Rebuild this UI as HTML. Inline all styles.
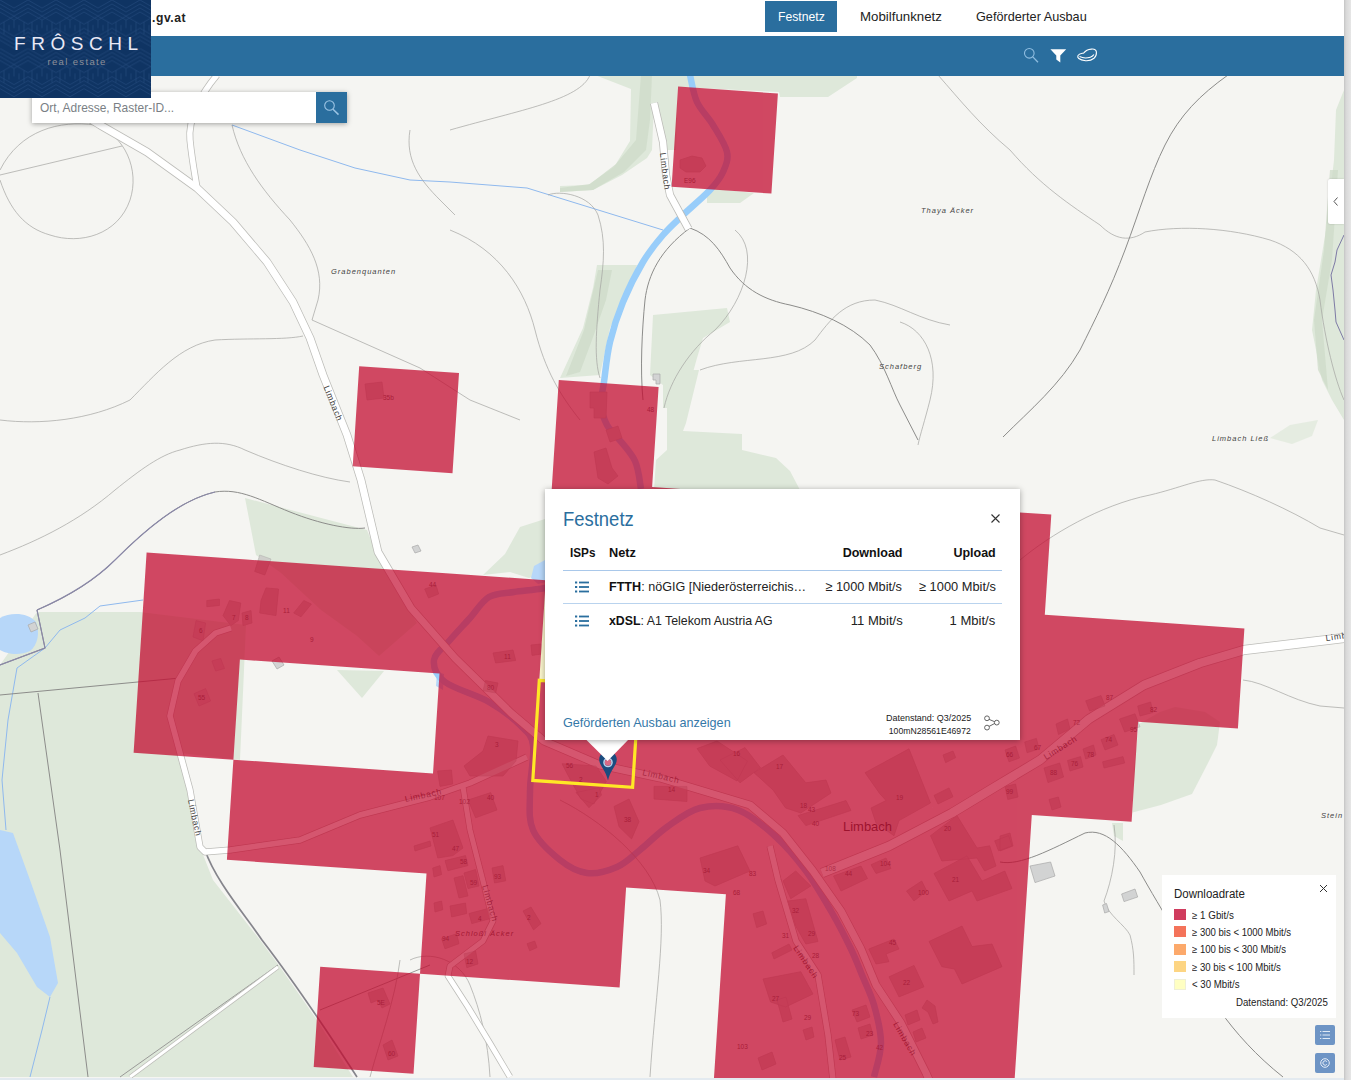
<!DOCTYPE html>
<html lang="de">
<head>
<meta charset="utf-8">
<title>Breitbandatlas</title>
<style>
*{box-sizing:border-box;margin:0;padding:0}
html,body{width:1351px;height:1080px;overflow:hidden;background:#fff}
body{font-family:"Liberation Sans",sans-serif;color:#222;position:relative}
.abs{position:absolute}
#page{position:absolute;left:0;top:0;width:1344px;height:1080px;overflow:hidden;background:#fff}
#sbar{position:absolute;left:1344px;top:0;width:7px;height:1080px;background:linear-gradient(90deg,#c4c4c4 0,#d8d8d8 2px,#e6e6e6 7px)}
#hdr{position:absolute;left:0;top:0;width:1344px;height:36px;background:#fff}
#bar{position:absolute;left:0;top:36px;width:1344px;height:39.5px;background:#2a6e9e}
#bottom{position:absolute;left:0;top:1078px;width:1344px;height:2px;background:#e3eaf0}
#map{position:absolute;left:0;top:0;width:1344px;height:1078px}
.t{position:absolute;white-space:nowrap;transform-origin:0 50%;line-height:1}
#logo{position:absolute;left:0;top:0;width:151px;height:97.500px;background:#0f3463;overflow:hidden}
#search{position:absolute;left:32px;top:92px;width:315px;height:31px;background:#fff;box-shadow:0 1px 5px rgba(0,0,0,.35)}
#search .btn{position:absolute;right:0;top:0;width:31px;height:31px;background:#2a6e9e}
#popup{position:absolute;left:545px;top:489px;width:474.5px;height:251px;background:#fff;box-shadow:0 1px 6px rgba(0,0,0,.35)}
#legend{position:absolute;left:1162px;top:875px;width:174px;height:143px;background:#fff}
.sw{position:absolute;left:12px;width:11.5px;height:11px}
.t.r{transform-origin:100% 50%}
.lg{font-size:10.500px;color:#222}
.ctl{position:absolute;left:1315px;width:20px;height:20px;background:#6d94c5;border-radius:2px}
#tab{position:absolute;left:1328px;top:179px;width:16px;height:45px;background:#fff;border-radius:2px 0 0 2px;box-shadow:0 0 2px rgba(0,0,0,.2)}
</style>
</head>
<body>
<div id="page">
<!--MAP-->
<svg id="map" viewBox="0 0 1344 1078" width="1344" height="1078">
<rect x="0" y="0" width="1344" height="1078" fill="#f5f5f2"/>
<g id="base">
<!-- green / forest areas -->
<g fill="#dee8da">
<path d="M0 665 L37 612 L140 612 L246 625 L240 760 L180 753 L200 847 L213 880 L260 940 L280 967 L317 1020 L353 1077 L0 1077 Z"/>
<path d="M245 498 L367 530 L380 562 L417 623 L379 656 L357 636 L321 610 L281 573 L256 555 Z"/>
<path d="M337 670 L384 671 L362 698 Z"/>
<path d="M595 75 L857 75 L857 78 L828 97 L780 97 L779 92 L678 87 L676 150 L665 150 L660 120 L654 103 L652 150 L647 158 L622 175 L593 190 L560 192 L560 186 L588 185 L614 167 L630 141 L631 89 Z"/>
<path d="M707 188 L754 193 L740 203 L707 203 Z"/>
<path d="M597 265 L637 265 L630 288 L610 328 L600 375 L560 378 L583 328 L593 288 Z"/>
<path d="M653 315 L727 308 L730 322 L703 338 L697 358 L683 408 L663 408 L663 385 L650 375 Z"/>
<path d="M664.500 370 L699 370 L686 423 L683 431 L742 434 L742 450 L776 458 L790 471 L800 490 L654 490 L656 460 L667 450 L667 397 Z"/>
<path d="M520 527 L545 519 L548 572 L529 578 L510 572 L483 575 L505 554 Z"/>
<path d="M1139 724 L1160 712 L1175 707 L1205 712 L1220 722 L1217 745 L1208 763 L1192 794 L1161 805 L1132.500 812.500 L1134 766 Z"/>
<path d="M1112 823 L1123 823 L1123 841 L1114 836 Z"/>
<path d="M1344 90 L1336 110 L1334 160 L1326 230 L1316 290 L1312 330 L1322 380 L1332 400 L1344 420 Z"/>
<path d="M1290 425 L1318 420 L1312 436 L1292 444 L1270 438 Z" opacity=".7"/>
</g>
<!-- darker hillshade in green -->
<g fill="#cddbc8" opacity=".75">
<path d="M641 75 L652 75 L650 120 L646 150 L624 172 L593 190 L560 192 L560 188 L590 184 L616 164 L636 140 Z"/>
<path d="M598 270 L612 270 L606 300 L592 340 L580 372 L566 376 L584 330 Z"/>
<path d="M1330 170 L1338 170 L1332 260 L1322 320 L1328 390 L1318 370 L1314 320 L1324 250 Z"/>
</g>
<!-- water -->
<g fill="#b7d7f9">
<path d="M0 618 C10 612 28 612 36 622 C40 632 38 645 30 651 C20 656 6 654 0 650 Z"/>
<path d="M0 830 L13 833 L30 880 L50 937 L58 983 L50 997 L37 987 L17 953 L0 933 Z"/>
<path d="M534 566 L545 560 L546 582 L538 584 L531 578 Z"/>
<path d="M437 672 L444 674 L443 690 L436 686 Z"/>
</g>
<g fill="none" stroke="#8fb9ee" stroke-width="1">
<path d="M232 125 L300 150 L355 168 L410 180 L450 182 L527 188 L663 230"/>
<path d="M143 600 L100 606 L85 618 L60 630 L45 648 L17 668 L8 720 L2 780 L6 830"/>
<path d="M50 997 L42 1030 L30 1077"/>
</g>
<path d="M690.0 75.0 C691.2 79.5 693.2 93.7 697.0 102.0 C700.8 110.3 708.0 116.7 713.0 125.0 C718.0 133.3 725.3 144.2 727.0 152.0 C728.7 159.8 725.8 165.7 723.0 172.0 C720.2 178.3 716.7 182.8 710.0 190.0 C703.3 197.2 690.8 207.5 683.0 215.0 C675.2 222.5 669.7 227.2 663.0 235.0 C656.3 242.8 649.7 250.8 643.0 262.0 C636.3 273.2 628.5 288.7 623.0 302.0 C617.5 315.3 613.2 328.7 610.0 342.0 C606.8 355.3 605.5 371.5 604.0 382.0 C602.5 392.5 600.5 397.8 601.0 405.0 C601.5 412.2 604.3 419.7 607.0 425.0 C609.7 430.3 612.3 431.0 617.0 437.0 C621.7 443.0 631.0 452.3 635.0 461.0 C639.0 469.7 640.0 484.3 641.0 489.0" fill="none" stroke="#98cdfa" stroke-width="6.500"/>
<path d="M641.0 489.0 C640.8 494.2 643.5 508.2 640.0 520.0 C636.5 531.8 628.3 550.3 620.0 560.0 C611.7 569.7 602.5 573.3 590.0 578.0 C577.5 582.7 557.7 585.7 545.0 588.0 C532.3 590.3 523.3 590.5 514.0 592.0 C504.7 593.5 496.3 592.7 489.0 597.0 C481.7 601.3 476.5 610.8 470.0 618.0 C463.5 625.2 456.0 633.0 450.0 640.0 C444.0 647.0 434.8 653.0 434.0 660.0 C433.2 667.0 435.8 675.0 445.0 682.0 C454.2 689.0 476.5 694.8 489.0 702.0 C501.5 709.2 512.7 717.8 520.0 725.0 C527.3 732.2 531.3 734.0 533.0 745.0 C534.7 756.0 530.0 776.8 530.0 791.0 C530.0 805.2 528.0 818.5 533.0 830.0 C538.0 841.5 551.0 852.8 560.0 860.0 C569.0 867.2 577.5 871.8 587.0 873.0 C596.5 874.2 608.2 870.8 617.0 867.0 C625.8 863.2 631.7 856.7 640.0 850.0 C648.3 843.3 657.0 834.0 667.0 827.0 C677.0 820.0 688.2 810.8 700.0 808.0 C711.8 805.2 725.5 805.3 738.0 810.0 C750.5 814.7 763.7 825.8 775.0 836.0 C786.3 846.2 796.7 858.5 806.0 871.0 C815.3 883.5 823.5 898.0 831.0 911.0 C838.5 924.0 845.8 938.3 851.0 949.0 C856.2 959.7 858.2 965.7 862.0 975.0 C865.8 984.3 870.8 993.7 874.0 1005.0 C877.2 1016.3 881.0 1031.0 881.0 1043.0 C881.0 1055.0 875.2 1071.3 874.0 1077.0" fill="none" stroke="#98cdfa" stroke-width="6.500"/>
<!-- contour lines -->
<g fill="none" stroke="#a3a3a0" stroke-width=".7">
<path d="M0 170 C20 130 60 120 95 125 C125 135 140 170 130 200 C118 235 80 245 50 235 C25 228 10 210 0 180"/>
<path d="M0 175 L122 146"/>
<path d="M232 125 C240 160 262 190 290 220 C310 245 325 270 318 300 L312 320"/>
<path d="M0 420 C40 425 90 420 130 400 C155 375 180 345 215 340 C250 338 285 340 303 336"/>
<path d="M312 320 L420 368 L470 400 L520 420"/>
<path d="M410 130 C405 160 420 180 440 200 L455 215"/>
<path d="M450 130 C520 110 580 100 590 75"/>
<path d="M450 230 C500 250 525 290 535 330 C545 370 560 395 580 420"/>
<path d="M548 195 C560 190 590 195 598 215 C606 240 604 262 600 290 C596 330 594 360 600 378"/>
<path d="M735 230 C760 250 745 300 715 330 C690 350 670 380 664 408"/>
<path d="M700 370 C740 355 790 365 815 340 C830 320 845 300 875 300 C900 305 920 320 950 325"/>
<path d="M938 75 C960 100 980 125 1010 150 C1040 185 1070 205 1100 225 C1115 240 1130 242 1145 232 C1180 225 1230 228 1270 240 C1300 250 1315 270 1320 300 C1325 340 1335 380 1344 400"/>
<path d="M900 322 C925 330 940 360 930 400 C925 420 920 435 918 445"/>
<path d="M1020 560 C1050 535 1100 505 1150 495 C1180 488 1200 478 1215 480 C1250 492 1290 510 1320 528 L1344 535"/>
<path d="M1243 680 C1265 682 1290 700 1320 706 L1344 708"/>
<path d="M1114 825 C1118 850 1112 880 1104 901 C1108 915 1125 925 1130 935 C1134 950 1134 960 1134 975"/>
<path d="M0 555 C40 540 80 520 115 490 C140 470 160 455 180 450 C205 442 225 440 245 450 C280 465 320 478 350 482"/>
<path d="M410 960 C430 950 460 960 470 985 C480 1010 488 1040 490 1077"/>
<path d="M400 960 C395 1000 380 1040 370 1077"/>
<path d="M560 800 C600 820 650 860 660 900 C665 940 655 1000 650 1077"/>
</g>
<!-- tracks (dark thin) -->
<g fill="none" stroke="#8c8c8a" stroke-width="1">
<path d="M1228 75 C1200 95 1180 115 1165 145 C1150 175 1140 210 1125 250 C1110 290 1095 320 1080 350 C1060 385 1030 410 1003 437"/>
<path d="M690 228 C660 250 648 275 645 300 C642 330 640 370 643 400"/>
<path d="M690 228 C710 235 720 250 730 268 C745 290 765 300 790 305 C820 312 850 325 870 345 C885 365 892 390 900 405 L918 440"/>
<path d="M0 695 L180 678"/>
<path d="M38 693 L60 850 L88 1077"/>
<path d="M205 850 C215 880 245 915 262 940 C285 970 320 1020 357 1077" stroke="#85858c" stroke-width="1.700"/>
<path d="M37 610 L45 648 L0 665 M37 610 C60 600 90 585 115 560 C145 530 180 500 215 492 C240 488 260 500 290 512 C320 524 350 530 365 528"/>
<path d="M1000 862 C1020 866 1050 850 1085 833 C1105 828 1122 846 1140 872 C1150 890 1162 910 1180 940 C1200 985 1230 1035 1283 1077"/>
<path d="M430 965 L320 1010 M120 1077 L278 965" stroke="#9a9a98"/>
</g>
<path d="M1344 235 L1337 250 L1335 262 L1331 275 L1333 290 L1335 310 L1336 322 L1344 340" fill="none" stroke="#7d7aa5" stroke-width="1"/>
<path d="M37 610 L45 648 L0 665 M37 610 C60 600 90 585 115 560 C145 530 180 500 215 492" fill="none" stroke="#8a88a8" stroke-width="1.200"/>
<!-- roads -->
<g fill="none" stroke-linecap="butt" stroke-linejoin="round">
<g stroke="#bcbcb8">
<path d="M40 88 L100 125 L147 152 L197 188 L233 222 L267 262 L293 302 L310 338 L323 375 L347 435 L361 480 L378 552 L411 608 L455 658 L511 713 L544 741 L600 765 L660 778 L700 790 L750 805 L783 833 L813 871 L841 911 L861 949 L876 985 L901 1023 L926 1073 L930 1082" stroke-width="8.500"/>
<path d="M217 75 C200 95 188 120 190 140 C192 160 195 175 197 188" stroke-width="7"/>
<path d="M654 103 L663 142 L666 175 L670 195 L688.500 229" stroke-width="8"/>
<path d="M822 873 L889 846 L952 813 L990 790 L1040 760 L1089 719 L1144 685 L1200 663 L1244 650 L1344 638" stroke-width="10"/>
<path d="M231 628 L215.600 633 L195.500 651 L178 681 L170 716 L180 753 L190 790 L200 847 L205 852 L230 850 L300 840 L360 815 L430 797 L470 783 L527 757" stroke-width="7"/>
<path d="M770 846 L778 880 L796 941 L818 975 L828 1035 L833 1080" stroke-width="7"/>
<path d="M150 912 L278 965 M120 1077 L278 965" stroke-width="0"/>
<path d="M463 787 L470 830 L483 881 L493 921 L483 941 L450 966 L448 976 L468 1007 L491 1045 L510 1077" stroke-width="6.500"/>
<path d="M130 1077 L278 967" stroke-width="4.500"/>
</g>
<g stroke="#ffffff">
<path d="M40 88 L100 125 L147 152 L197 188 L233 222 L267 262 L293 302 L310 338 L323 375 L347 435 L361 480 L378 552 L411 608 L455 658 L511 713 L544 741 L600 765 L660 778 L700 790 L750 805 L783 833 L813 871 L841 911 L861 949 L876 985 L901 1023 L926 1073 L930 1082" stroke-width="7"/>
<path d="M217 75 C200 95 188 120 190 140 C192 160 195 175 197 188" stroke-width="5.500"/>
<path d="M654 103 L663 142 L666 175 L670 195 L688.500 229" stroke-width="6.500"/>
<path d="M822 873 L889 846 L952 813 L990 790 L1040 760 L1089 719 L1144 685 L1200 663 L1244 650 L1344 638" stroke-width="8.500"/>
<path d="M231 628 L215.600 633 L195.500 651 L178 681 L170 716 L180 753 L190 790 L200 847 L205 852 L230 850 L300 840 L360 815 L430 797 L470 783 L527 757" stroke-width="5.500"/>
<path d="M770 846 L778 880 L796 941 L818 975 L828 1035 L833 1080" stroke-width="5.500"/>
<path d="M463 787 L470 830 L483 881 L493 921 L483 941 L450 966 L448 976 L468 1007 L491 1045 L510 1077" stroke-width="5"/>
<path d="M130 1077 L278 967" stroke-width="3"/>
</g>
</g>
<!-- grey buildings outside overlay -->
<g fill="#d2d3d3" stroke="#a9a9a9" stroke-width=".7">
<path d="M1030 866 L1050.600 862 L1055 876 L1035 882.600 Z"/>
<path d="M1121.600 894 L1135 889 L1137.700 897 L1124 901.600 Z"/>
<path d="M1102.600 905 L1106.500 903.500 L1109 911.500 L1104.700 913 Z"/>
<path d="M653 374 L660 374 L660 384 L656 384 L656 380 L653 380 Z"/>
<path d="M28 625 L35 622 L38 629 L31 632 Z"/>
<path d="M272 661 L279 657 L284 665 L277 669 Z"/>
<path d="M412 547 L418 545 L421 551 L415 553 Z"/>
</g>

<path d="M488 736 L518 741 L516 761 L503 776 L470 776 L464 766 L483 751ZM437.6 771 L451.5 770 L452.7 784 L440 786.4ZM468 800 L490.7 792.6 L497 810 L475.6 817.8ZM430 827.9 L452.9 820 L463 848 L452.9 855.6 L437.8 858ZM414 846 L430 841 L431 846 L415 851ZM562 763.7 L596 766 L606.4 781.4 L593.8 804 L581 799 L571 781ZM614 806.5 L629 799 L639 821.7 L631.6 839 L619 826.7ZM654 786.4 L687 786.4 L687 801.5 L654 799ZM697 748.6 L717 741 L747.5 761 L737 781 L709.7 766ZM493 653 L513 650 L515.7 660.5 L495.6 663ZM485.5 680.6 L498 683 L495.6 693 L483 690.7ZM531 645 L541 644 L542 654 L532 655.4ZM720 760 L745 747.6 L760.5 767.7 L740 782.8ZM754 772.7 L783 755 L805.8 782.8 L826 780 L831 793 L800.8 813 L785.6 808 L773 790ZM798 815.6 L846 800.5 L851 810.5 L805.8 825.6ZM865 772.7 L909 748.8 L930.5 803 L899 820.6 L894 835.7 L876 823 L871 808 L886 800.5 L880 794ZM934 795.4 L949 787.9 L953 796.7 L938 804ZM943 755 L953 751 L955.7 757.6 L945.6 762.7ZM930.5 835.7 L957 815.6 L977 848 L989.7 845.8 L996 866 L984.6 871 L977 858 L941.8 861ZM994.7 840.8 L1008.6 835.7 L1012 845.8 L998.5 850.8ZM934 873.5 L967 855.9 L982 881 L1004.8 871 L1012 888.6 L977 901 L972 891 L949 901ZM906.5 891 L921.7 881 L926.7 891 L914 901ZM833.5 876 L861 866 L867.5 878.5 L841 891ZM871 864.7 L886 858 L891 868.5 L876 873.5ZM700 858 L737.8 845.8 L750 871 L715 886 L705 881ZM783 881 L795.7 871 L810.8 886 L790.7 898.7ZM788 901 L805.8 898.7 L818 941.5 L805.8 944 L795.7 926ZM753 913.8 L763 911 L766.7 923.9 L756.7 927.6ZM771.8 952.8 L789 944 L792 950 L774 959ZM763 979 L800.8 971.7 L813 994 L785.6 1007 L770.5 1002ZM868.8 949 L894 939 L899 949 L886 954 L889 961.7 L876 964ZM929 941.5 L962 926 L972 946.5 L992 944 L1002 966.7 L962 984 L954.4 969 L941.8 966.7ZM889 976.8 L914 965.4 L924 986.8 L899 996.9ZM445 860.6 L465.5 855.6 L468 865.6 L447.9 870.7ZM454 878 L463 875.7 L468 895.9 L459 898ZM464 873 L475.6 869.5 L479 886 L468 888.5ZM492 868 L503 865.6 L505.8 880.8 L494.5 883ZM469 913.5 L488 908.5 L490.7 918.5 L471.8 923.6ZM523 911 L531 907 L541 923.6 L533.5 929.9ZM527 943.7 L534.7 941 L537 947.5 L529.7 950.8ZM441.6 938.7 L456.7 933.7 L459 943.7 L445 948.8ZM464 953.8 L475.6 951 L478 963.9 L466.8 967.7ZM432.7 868 L440 865.6 L441.6 874.5 L434 877ZM434 903 L441.6 901 L442.8 909.7 L435 912ZM450 906 L465.5 903 L466.7 913.5 L451.6 917ZM576 792.6 L599 787.6 L601.5 795 L589 807.7ZM1085.7 700.8 L1101 695.6 L1105 706 L1089.6 711ZM1137.7 706 L1150.6 702 L1153 712.5 L1140 716ZM1119.5 719 L1135 713.8 L1140 726.8 L1124.7 732ZM1101 739.7 L1114 734.5 L1118 745 L1105 750ZM1056 724 L1067.5 719 L1070 729 L1058.5 734.5ZM1083 749 L1093.5 745 L1096 755 L1085.7 759ZM1067.5 760.5 L1080.5 756.6 L1083 767 L1070 771ZM1044 768 L1059.7 763 L1063.6 777 L1048 782.6ZM1102.6 761.8 L1123 756.6 L1124.7 763 L1104 768ZM1005 786.5 L1015.6 784 L1018 797 L1007.8 799.5ZM1005 750 L1015.6 746 L1019.5 758 L1009 761.8ZM1024.7 742 L1036.4 738.4 L1039 749 L1027 752.7ZM1049 799.5 L1058.4 797 L1061 807 L1052 810ZM1000 836 L1010 833 L1013 846 L1000 851ZM259.7 555 L271 559 L264.8 575 L254.7 571.5ZM194 693.7 L205.6 688.6 L210.6 701 L199 706ZM211.9 661 L220.7 658.4 L224.5 668.5 L215.6 671ZM196 620.6 L205.6 623 L203 640.8 L193 637ZM223 615.6 L229.5 600.5 L240.8 603 L238.3 620.6 L230.8 625.6ZM242 613 L251 610.5 L252 623 L243 625.6ZM266 587.9 L278.6 589 L276 615.6 L259.7 613 L261 600.5ZM206.8 600.5 L219.4 599 L219.4 605.5 L206.8 606.7ZM293.7 613 L303.8 600.5 L311.4 604 L301 616.8ZM424.7 589 L436 585 L438.6 594 L428.5 598ZM590 392 L607 392 L606 418 L594 418 L594 408 L590 408ZM606 430 L618 426 L622 438 L610 442ZM594 452 L606 448 L612 468 L618 476 L608 484 L598 478ZM365 384 L382 382 L384 398 L367 400ZM680 160 L692 156 L702 158 L706 166 L700 172 L686 172 L680 168ZM852 1010 L866 1005 L870 1017 L857 1022ZM858 1028 L870 1024 L873 1035 L861 1039ZM835 1040 L845 1037 L851 1057 L840 1060ZM777 1000 L786 997 L792 1019 L783 1022ZM803 1030 L812 1027 L814 1037 L806 1040ZM758 1058 L772 1052 L776 1064 L762 1070ZM905 1015 L917 1010 L920 1020 L908 1025ZM913 1032 L922 1028 L926 1038 L916 1042ZM927 1000 L935 1006 L938 1022 L933 1024 L928 1012 L922 1008ZM368 993 L383 988 L390 1004 L382 1008 L378 1000 L371 1003ZM383 1045 L392 1040 L398 1056 L388 1060Z" fill="#cfcfcb" stroke="#b4b4b0" stroke-width=".6"/>

<g font-family="Liberation Sans, sans-serif" fill="#3a3a3a">
<text x="843" y="831" font-size="13" textLength="49" lengthAdjust="spacingAndGlyphs" fill="#2a2a2a">Limbach</text>
<g font-size="8.500" letter-spacing=".8">
<text transform="translate(323.500 387) rotate(68)">Limbach</text>
<text transform="translate(660 153) rotate(83)">Limbach</text>
<text transform="translate(188 800) rotate(78)">Limbach</text>
<text transform="translate(405.500 802) rotate(-12)">Limbach</text>
<text transform="translate(642 775) rotate(13)">Limbach</text>
<text transform="translate(1046 760) rotate(-32)">Limbach</text>
<text transform="translate(793 948) rotate(56)">Limbach</text>
<text transform="translate(893 1024) rotate(60)">Limbach</text>
<text transform="translate(482 886) rotate(74)">Limbach</text>
<text transform="translate(1326 641) rotate(-8)">Limbach</text>
</g>
<g font-size="7.500" font-style="italic" letter-spacing="1" fill="#444">
<text x="331" y="273.500">Grabenquanten</text>
<text x="921" y="212.500">Thaya Äcker</text>
<text x="879" y="368.500">Schafberg</text>
<text x="1212" y="440.500">Limbach Ließ</text>
<text x="1321" y="817.500">Stein</text>
<text x="455" y="935.500">Schloßl Äcker</text>
</g>
<g font-size="6.500" fill="#555">
<text x="383" y="400">35b</text><text x="684" y="183">E96</text><text x="647" y="412">48</text>
<text x="429" y="587">44</text><text x="283" y="613">11</text><text x="232" y="620">7</text><text x="245" y="620">8</text><text x="199" y="633">6</text><text x="310" y="642">9</text><text x="198" y="700">55</text>
<text x="504" y="659">11</text><text x="487" y="690">80</text><text x="495" y="747">3</text><text x="566" y="768">56</text><text x="579" y="782">2</text><text x="595" y="797">1</text><text x="624" y="822">38</text><text x="668" y="792">14</text>
<text x="733" y="756">16</text><text x="776" y="769">17</text><text x="800" y="808">18</text><text x="808" y="812">43</text><text x="812" y="826">40</text><text x="896" y="800">19</text><text x="944" y="831">20</text><text x="952" y="882">21</text><text x="918" y="895">100</text><text x="880" y="866">104</text><text x="845" y="876">44</text><text x="825" y="871">108</text>
<text x="703" y="873">34</text><text x="749" y="876">83</text><text x="733" y="895">68</text><text x="792" y="913">32</text><text x="782" y="938">31</text><text x="808" y="936">29</text><text x="812" y="958">28</text><text x="772" y="1001">27</text><text x="889" y="945">45</text><text x="903" y="985">22</text><text x="852" y="1016">73</text>
<text x="487" y="800">40</text><text x="459" y="804">102</text><text x="432" y="837">51</text><text x="452" y="851">47</text><text x="460" y="864">58</text><text x="470" y="885">59</text><text x="494" y="879">93</text><text x="478" y="921">4</text><text x="527" y="920">2</text><text x="442" y="941">94</text><text x="466" y="964">12</text><text x="434" y="800">107</text>
<text x="1106" y="700">87</text><text x="1150" y="712">82</text><text x="1130" y="732">95</text><text x="1105" y="742">74</text><text x="1073" y="725">72</text><text x="1087" y="757">78</text><text x="1071" y="766">76</text><text x="1050" y="775">88</text><text x="1006" y="794">99</text><text x="1006" y="757">66</text><text x="1034" y="750">67</text>
<text x="377" y="1005">5E</text><text x="388" y="1056">60</text><text x="804" y="1020">29</text><text x="737" y="1049">103</text><text x="839" y="1060">25</text><text x="866" y="1036">23</text><text x="876" y="1050">42</text>
</g>
</g>

</g>
<path d="M545.8 580.2 L645.6 587.1 L639.1 687.2 L539.3 680.3Z" fill="#fbf5c8" fill-opacity="0.9"/>
<clipPath id="rc"><path d="M678.1 86.6 L777.9 93.5 L771.4 193.6 L671.6 186.7ZM359.2 366.2 L459.0 373.1 L452.5 473.2 L352.7 466.3ZM558.8 380.0 L658.6 386.9 L652.1 487.0 L552.3 480.1ZM552.3 480.1 L652.1 487.0 L645.6 587.1 L545.8 580.2ZM652.1 487.0 L751.9 493.9 L745.4 594.0 L645.6 587.1ZM751.9 493.9 L851.7 500.8 L845.2 600.9 L745.4 594.0ZM851.7 500.8 L951.5 507.7 L945.0 607.8 L845.2 600.9ZM951.5 507.7 L1051.3 514.6 L1044.8 614.7 L945.0 607.8ZM146.6 552.6 L246.4 559.5 L239.9 659.6 L140.1 652.7ZM246.4 559.5 L346.2 566.4 L339.7 666.5 L239.9 659.6ZM346.2 566.4 L446.0 573.3 L439.5 673.4 L339.7 666.5ZM446.0 573.3 L545.8 580.2 L539.3 680.3 L439.5 673.4ZM645.6 587.1 L745.4 594.0 L738.9 694.1 L639.1 687.2ZM745.4 594.0 L845.2 600.9 L838.7 701.0 L738.9 694.1ZM845.2 600.9 L945.0 607.8 L938.5 707.9 L838.7 701.0ZM945.0 607.8 L1044.8 614.7 L1038.3 714.8 L938.5 707.9ZM1044.8 614.7 L1144.6 621.6 L1138.1 721.7 L1038.3 714.8ZM1144.6 621.6 L1244.4 628.5 L1237.9 728.6 L1138.1 721.7ZM140.1 652.7 L239.9 659.6 L233.4 759.7 L133.6 752.8ZM439.5 673.4 L539.3 680.3 L532.8 780.4 L433.0 773.5ZM539.3 680.3 L639.1 687.2 L632.6 787.3 L532.8 780.4ZM639.1 687.2 L738.9 694.1 L732.4 794.2 L632.6 787.3ZM738.9 694.1 L838.7 701.0 L832.2 801.1 L732.4 794.2ZM838.7 701.0 L938.5 707.9 L932.0 808.0 L832.2 801.1ZM938.5 707.9 L1038.3 714.8 L1031.8 814.9 L932.0 808.0ZM1038.3 714.8 L1138.1 721.7 L1131.6 821.8 L1031.8 814.9ZM233.4 759.7 L333.2 766.6 L326.7 866.7 L226.9 859.8ZM333.2 766.6 L433.0 773.5 L426.5 873.6 L326.7 866.7ZM433.0 773.5 L532.8 780.4 L526.3 880.5 L426.5 873.6ZM532.8 780.4 L632.6 787.3 L626.1 887.4 L526.3 880.5ZM632.6 787.3 L732.4 794.2 L725.9 894.3 L626.1 887.4ZM732.4 794.2 L832.2 801.1 L825.7 901.2 L725.9 894.3ZM832.2 801.1 L932.0 808.0 L925.5 908.1 L825.7 901.2ZM932.0 808.0 L1031.8 814.9 L1025.3 915.0 L925.5 908.1ZM426.5 873.6 L526.3 880.5 L519.8 980.6 L420.0 973.7ZM526.3 880.5 L626.1 887.4 L619.6 987.5 L519.8 980.6ZM725.9 894.3 L825.7 901.2 L819.2 1001.3 L719.4 994.4ZM825.7 901.2 L925.5 908.1 L919.0 1008.2 L819.2 1001.3ZM925.5 908.1 L1025.3 915.0 L1018.8 1015.1 L919.0 1008.2ZM320.2 966.8 L420.0 973.7 L413.5 1073.8 L313.7 1066.9ZM719.4 994.4 L819.2 1001.3 L812.7 1101.4 L712.9 1094.5ZM819.2 1001.3 L919.0 1008.2 L912.5 1108.3 L812.7 1101.4ZM919.0 1008.2 L1018.8 1015.1 L1012.3 1115.2 L912.5 1108.3ZM712.9 1094.5 L812.7 1101.4 L806.2 1201.5 L706.4 1194.6ZM812.7 1101.4 L912.5 1108.3 L906.0 1208.4 L806.2 1201.5ZM912.5 1108.3 L1012.3 1115.2 L1005.8 1215.3 L906.0 1208.4Z"/></clipPath>
<path d="M678.1 86.6 L777.9 93.5 L771.4 193.6 L671.6 186.7ZM359.2 366.2 L459.0 373.1 L452.5 473.2 L352.7 466.3ZM558.8 380.0 L658.6 386.9 L652.1 487.0 L552.3 480.1ZM552.3 480.1 L652.1 487.0 L645.6 587.1 L545.8 580.2ZM652.1 487.0 L751.9 493.9 L745.4 594.0 L645.6 587.1ZM751.9 493.9 L851.7 500.8 L845.2 600.9 L745.4 594.0ZM851.7 500.8 L951.5 507.7 L945.0 607.8 L845.2 600.9ZM951.5 507.7 L1051.3 514.6 L1044.8 614.7 L945.0 607.8ZM146.6 552.6 L246.4 559.5 L239.9 659.6 L140.1 652.7ZM246.4 559.5 L346.2 566.4 L339.7 666.5 L239.9 659.6ZM346.2 566.4 L446.0 573.3 L439.5 673.4 L339.7 666.5ZM446.0 573.3 L545.8 580.2 L539.3 680.3 L439.5 673.4ZM645.6 587.1 L745.4 594.0 L738.9 694.1 L639.1 687.2ZM745.4 594.0 L845.2 600.9 L838.7 701.0 L738.9 694.1ZM845.2 600.9 L945.0 607.8 L938.5 707.9 L838.7 701.0ZM945.0 607.8 L1044.8 614.7 L1038.3 714.8 L938.5 707.9ZM1044.8 614.7 L1144.6 621.6 L1138.1 721.7 L1038.3 714.8ZM1144.6 621.6 L1244.4 628.5 L1237.9 728.6 L1138.1 721.7ZM140.1 652.7 L239.9 659.6 L233.4 759.7 L133.6 752.8ZM439.5 673.4 L539.3 680.3 L532.8 780.4 L433.0 773.5ZM539.3 680.3 L639.1 687.2 L632.6 787.3 L532.8 780.4ZM639.1 687.2 L738.9 694.1 L732.4 794.2 L632.6 787.3ZM738.9 694.1 L838.7 701.0 L832.2 801.1 L732.4 794.2ZM838.7 701.0 L938.5 707.9 L932.0 808.0 L832.2 801.1ZM938.5 707.9 L1038.3 714.8 L1031.8 814.9 L932.0 808.0ZM1038.3 714.8 L1138.1 721.7 L1131.6 821.8 L1031.8 814.9ZM233.4 759.7 L333.2 766.6 L326.7 866.7 L226.9 859.8ZM333.2 766.6 L433.0 773.5 L426.5 873.6 L326.7 866.7ZM433.0 773.5 L532.8 780.4 L526.3 880.5 L426.5 873.6ZM532.8 780.4 L632.6 787.3 L626.1 887.4 L526.3 880.5ZM632.6 787.3 L732.4 794.2 L725.9 894.3 L626.1 887.4ZM732.4 794.2 L832.2 801.1 L825.7 901.2 L725.9 894.3ZM832.2 801.1 L932.0 808.0 L925.5 908.1 L825.7 901.2ZM932.0 808.0 L1031.8 814.9 L1025.3 915.0 L925.5 908.1ZM426.5 873.6 L526.3 880.5 L519.8 980.6 L420.0 973.7ZM526.3 880.5 L626.1 887.4 L619.6 987.5 L519.8 980.6ZM725.9 894.3 L825.7 901.2 L819.2 1001.3 L719.4 994.4ZM825.7 901.2 L925.5 908.1 L919.0 1008.2 L819.2 1001.3ZM925.5 908.1 L1025.3 915.0 L1018.8 1015.1 L919.0 1008.2ZM320.2 966.8 L420.0 973.7 L413.5 1073.8 L313.7 1066.9ZM719.4 994.4 L819.2 1001.3 L812.7 1101.4 L712.9 1094.5ZM819.2 1001.3 L919.0 1008.2 L912.5 1108.3 L812.7 1101.4ZM919.0 1008.2 L1018.8 1015.1 L1012.3 1115.2 L912.5 1108.3ZM712.9 1094.5 L812.7 1101.4 L806.2 1201.5 L706.4 1194.6ZM812.7 1101.4 L912.5 1108.3 L906.0 1208.4 L806.2 1201.5ZM912.5 1108.3 L1012.3 1115.2 L1005.8 1215.3 L906.0 1208.4Z" fill="#c30d31" fill-opacity="0.75"/>
<g clip-path="url(#rc)" opacity=".07" fill="none" stroke-linejoin="round"><g stroke="#ffffff">
<path d="M40 88 L100 125 L147 152 L197 188 L233 222 L267 262 L293 302 L310 338 L323 375 L347 435 L361 480 L378 552 L411 608 L455 658 L511 713 L544 741 L600 765 L660 778 L700 790 L750 805 L783 833 L813 871 L841 911 L861 949 L876 985 L901 1023 L926 1073 L930 1082" stroke-width="7"/>
<path d="M217 75 C200 95 188 120 190 140 C192 160 195 175 197 188" stroke-width="5.500"/>
<path d="M654 103 L663 142 L666 175 L670 195 L688.500 229" stroke-width="6.500"/>
<path d="M822 873 L889 846 L952 813 L990 790 L1040 760 L1089 719 L1144 685 L1200 663 L1244 650 L1344 638" stroke-width="8.500"/>
<path d="M231 628 L215.600 633 L195.500 651 L178 681 L170 716 L180 753 L190 790 L200 847 L205 852 L230 850 L300 840 L360 815 L430 797 L470 783 L527 757" stroke-width="5.500"/>
<path d="M770 846 L778 880 L796 941 L818 975 L828 1035 L833 1080" stroke-width="5.500"/>
<path d="M463 787 L470 830 L483 881 L493 921 L483 941 L450 966 L448 976 L468 1007 L491 1045 L510 1077" stroke-width="5"/>
<path d="M130 1077 L278 967" stroke-width="3"/>
</g></g>
<path d="M539.3 680.3 L639.1 687.2 L632.6 787.3 L532.8 780.4Z" fill="none" stroke="#ffe826" stroke-width="3.200" stroke-linejoin="miter"/>
<g id="labels" font-family="Liberation Sans, sans-serif">

</g>
</svg>
<div id="hdr"></div>
<div id="bar"></div>
<div id="bottom"></div>
<div class="t" id="url" style="left:152px;top:11px;font-size:13px;font-weight:bold;letter-spacing:.6px;color:#222;transform:scaleX(0.9324)">.gv.at</div>
<div class="abs" style="left:765px;top:1px;width:72px;height:31px;background:#2a6e9e"></div>
<div class="t" id="n1" style="left:777.5px;top:10px;font-size:13.5px;color:#fff;transform:scaleX(0.9038)">Festnetz</div>
<div class="t" id="n2" style="left:859.5px;top:10px;font-size:13.5px;color:#222;transform:scaleX(0.9831)">Mobilfunknetz</div>
<div class="t" id="n3" style="left:975.5px;top:10px;font-size:13.5px;color:#222;transform:scaleX(0.9398)">Geförderter Ausbau</div>
<svg class="abs" style="left:1020px;top:44px" width="84" height="24" viewBox="0 0 84 24">
 <g fill="none" stroke="#8fbde0" stroke-width="1.1"><circle cx="9.300" cy="9.300" r="4.800"/><path d="M12.800 12.900 L18 18.300" stroke-width="1.300"/></g>
 <path d="M30.4 5.2 H46.2 L40.3 11.6 V18.4 L36.3 15.6 V11.6 Z" fill="#fff"/>
 <path d="M58 11.5 c1.5-2.4 4-2 5.8-2.6 c1.6-2.2 4.6-3.6 7.6-3.8 c2.6-.2 4.8 .6 5 3 c.2 2.2 -.6 4.600 -2.400 6.200 c-2.200 1.800 -5.400 2.600 -8.400 2.400 c-2.600 -.2 -5.200 -.8 -6.800 -2.200 c-1.300 -1.100 -1.400 -2 -.8 -3 z M59.500 12.600 c2.800 1.300 7.500 1.600 10.800 .6 c1.600 -.5 3 -1.400 3.600 -2.600" fill="none" stroke="#fff" stroke-width="1.1" stroke-linejoin="round"/>
</svg>

<div id="search"><div class="t" id="ph" style="left:8px;top:8.500px;font-size:13px;color:#7a7f85;transform:scaleX(0.9185)">Ort, Adresse, Raster-ID...</div><div class="btn"><svg width="31" height="31" viewBox="0 0 31 31"><g fill="none" stroke="#9cc4e4" stroke-width="1.1"><circle cx="13.5" cy="13.500" r="4.800"/><path d="M17 17.200 L22.500 22.600" stroke-width="1.500"/></g></svg></div></div>

<div id="logo">
<svg class="abs" style="left:0;top:0" width="151" height="97" viewBox="0 0 151 97">
<defs><pattern id="hx" width="28" height="48.500" patternUnits="userSpaceOnUse">
<g fill="none" stroke="#2b5185" stroke-width=".6">
<path d="M0 0 L14 8 L28 0 M0 4 L14 12 L28 4 M0 8 L14 16 L28 8 M0 12 L14 20 L28 12 M0 24.200 L14 16.200 M14 16.200 L28 24.200 M0 28.200 L14 36.200 L28 28.200 M0 32.200 L14 40.200 L28 32.200 M0 36.200 L14 44.200 L28 36.200 M0 40.200 L14 48.200 L28 40.200 M14 20 V28 M4 22 V34 M24 22 V34 M9 25 V31 M19 25 V31"/>
</g></pattern></defs>
<rect width="151" height="97" fill="#0f3463"/>
<rect width="151" height="97" fill="url(#hx)" opacity=".8"/>
<text x="14" y="50.400" font-family="Liberation Sans, sans-serif" font-size="19" fill="#e9e9f6" textLength="124" lengthAdjust="spacing">FRÔSCHL</text>
<text x="47.400" y="65.200" font-family="Liberation Sans, sans-serif" font-size="9.500" fill="#8e9098" textLength="58" lengthAdjust="spacing">real estate</text>
</svg>
</div>

<svg class="abs" style="left:598px;top:750px" width="20" height="32" viewBox="0 0 20 32"><path d="M10 1 C5 1 1.200 4.800 1.200 9.600 C1.200 15.500 7.500 19.500 10 30.500 C12.500 19.500 18.800 15.500 18.800 9.600 C18.800 4.800 15 1 10 1 Z" fill="#1b4c7f"/><circle cx="10" cy="12.500" r="4" fill="none" stroke="#b9cfe8" stroke-width="1.600"/><circle cx="10" cy="12.500" r="3.200" fill="#d96a86"/></svg>
<svg class="abs" style="left:585px;top:739px" width="46" height="24" viewBox="0 0 46 24"><path d="M0.500 0 H44 L22.600 22 Z" fill="#fff"/></svg>
<div id="popup">
<div class="t" id="ptitle" style="left:18px;top:20px;font-size:20px;color:#2a6e9e;transform:scaleX(0.9221)">Festnetz</div>
<svg class="abs" style="left:445px;top:24px" width="11" height="11" viewBox="0 0 11 11"><path d="M1.500 1.500 L9.500 9.500 M9.500 1.500 L1.500 9.500" stroke="#333" stroke-width="1.100" fill="none"/></svg>
<div class="t" id="h1" style="left:24.500px;top:57px;font-size:13.500px;font-weight:bold;color:#111;transform:scaleX(0.869)">ISPs</div>
<div class="t" id="h2" style="left:64px;top:57px;font-size:13.500px;font-weight:bold;color:#111;transform:scaleX(0.9448)">Netz</div>
<div class="t r" id="h3" style="right:117.200px;top:57px;font-size:13.500px;font-weight:bold;color:#111;transform:scaleX(0.9277)">Download</div>
<div class="t r" id="h4" style="right:24px;top:57px;font-size:13.500px;font-weight:bold;color:#111;transform:scaleX(0.9261)">Upload</div>
<div class="abs" style="left:18px;top:80.500px;width:439px;height:1.500px;background:#a9c8ea"></div>
<svg class="abs" style="left:30px;top:92px" width="14" height="12" viewBox="0 0 14 12"><g fill="#2a6e9e"><rect x="0" y="0.500" width="2.200" height="2"/><rect x="4" y="0.600" width="10" height="1.800"/><rect x="0" y="5" width="2.200" height="2"/><rect x="4" y="5.100" width="10" height="1.800"/><rect x="0" y="9.500" width="2.200" height="2"/><rect x="4" y="9.600" width="10" height="1.800"/></g></svg>
<div class="t" id="r1a" style="left:64px;top:91px;font-size:13.500px;color:#222;transform:scaleX(0.9321)"><b style="color:#111">FTTH</b>: nöGIG [Niederösterreichis…</div>
<div class="t r" id="r1b" style="right:117.200px;top:91px;font-size:13.500px;color:#222;transform:scaleX(0.9457)">≥ 1000 Mbit/s</div>
<div class="t r" id="r1c" style="right:24px;top:91px;font-size:13.500px;color:#222;transform:scaleX(0.9506)">≥ 1000 Mbit/s</div>
<div class="abs" style="left:18px;top:114px;width:439px;height:1px;background:#b9d3ee"></div>
<svg class="abs" style="left:30px;top:125.500px" width="14" height="12" viewBox="0 0 14 12"><g fill="#2a6e9e"><rect x="0" y="0.500" width="2.200" height="2"/><rect x="4" y="0.600" width="10" height="1.800"/><rect x="0" y="5" width="2.200" height="2"/><rect x="4" y="5.100" width="10" height="1.800"/><rect x="0" y="9.500" width="2.200" height="2"/><rect x="4" y="9.600" width="10" height="1.800"/></g></svg>
<div class="t" id="r2a" style="left:64px;top:124.500px;font-size:13.500px;color:#222;transform:scaleX(0.914)"><b style="color:#111">xDSL</b>: A1 Telekom Austria AG</div>
<div class="t r" id="r2b" style="right:117.200px;top:124.500px;font-size:13.500px;color:#222;transform:scaleX(0.9667)">11 Mbit/s</div>
<div class="t r" id="r2c" style="right:24px;top:124.500px;font-size:13.500px;color:#222;transform:scaleX(0.9681)">1 Mbit/s</div>
<div class="t" id="plink" style="left:18px;top:227px;font-size:13.500px;color:#3578a8;transform:scaleX(0.9346)">Geförderten Ausbau anzeigen</div>
<div class="t r" id="pd1" style="right:48.500px;top:224px;font-size:9.500px;color:#222;transform:scaleX(0.9456)">Datenstand: Q3/2025</div>
<div class="t r" id="pd2" style="right:48.500px;top:236.500px;font-size:9.500px;color:#222;transform:scaleX(0.9133)">100mN28561E46972</div>
<svg class="abs" style="left:438px;top:225px" width="18" height="18" viewBox="0 0 18 18"><g fill="#fff" stroke="#555" stroke-width=".9"><path d="M4 4.500 L13.500 8.500 L4 13.500" fill="none"/><circle cx="4" cy="4.300" r="2.400"/><circle cx="13.800" cy="8.600" r="2.400"/><circle cx="4" cy="13.600" r="2.400"/></g></svg>
</div>

<div id="legend">
<div class="t" id="lt" style="left:12px;top:12.500px;font-size:12px;color:#222;transform:scaleX(0.9568)">Downloadrate</div>
<svg class="abs" style="left:157px;top:8.500px" width="9" height="9" viewBox="0 0 9 9"><path d="M1 1 L8 8 M8 1 L1 8" stroke="#333" stroke-width="1" fill="none"/></svg>
<div class="sw" style="top:34px;background:#d03c5e"></div><div class="t lg" id="l1" style="left:30px;top:34.500px;transform:scaleX(0.9333)">≥ 1 Gbit/s</div>
<div class="sw" style="top:51.400px;background:#f4735a"></div><div class="t lg" id="l2" style="left:30px;top:51.900px;transform:scaleX(0.911)">≥ 300 bis &lt; 1000 Mbit/s</div>
<div class="sw" style="top:68.800px;background:#fca96b"></div><div class="t lg" id="l3" style="left:30px;top:69.300px;transform:scaleX(0.9126)">≥ 100 bis &lt; 300 Mbit/s</div>
<div class="sw" style="top:86.200px;background:#fdd583"></div><div class="t lg" id="l4" style="left:30px;top:86.700px;transform:scaleX(0.9155)">≥ 30 bis &lt; 100 Mbit/s</div>
<div class="sw" style="top:103.600px;background:#ffffc2;outline:1px solid #efefd6;outline-offset:-1px"></div><div class="t lg" id="l5" style="left:30px;top:104.100px;transform:scaleX(0.9212)">&lt; 30 Mbit/s</div>
<div class="t r" id="ld" style="right:8px;top:121.500px;font-size:10.500px;color:#222;transform:scaleX(0.92)">Datenstand: Q3/2025</div>
</div>
<div id="tab"><svg width="16" height="45" viewBox="0 0 16 45"><path d="M9.500 18.500 L6 22.500 L9.500 26.500" fill="none" stroke="#555" stroke-width="1"/></svg></div>
<div class="ctl" style="top:1025px"><svg width="20" height="20" viewBox="0 0 20 20"><g stroke="#dfe9f5" stroke-width="1" fill="none"><path d="M7.500 6.500 H15 M7.500 10 H15 M7.500 13.500 H15 M5 6.500 H6.300 M5 10 H6.300 M5 13.500 H6.300"/></g></svg></div>
<div class="ctl" style="top:1052.500px"><svg width="20" height="20" viewBox="0 0 20 20"><circle cx="10" cy="10" r="4.300" fill="none" stroke="#e6eef8" stroke-width="1"/><path d="M11.800 8.600 A2.200 2.200 0 1 0 11.800 11.400" fill="none" stroke="#e6eef8" stroke-width="1"/></svg></div>

</div>
<div id="sbar"></div>
</body>
</html>
